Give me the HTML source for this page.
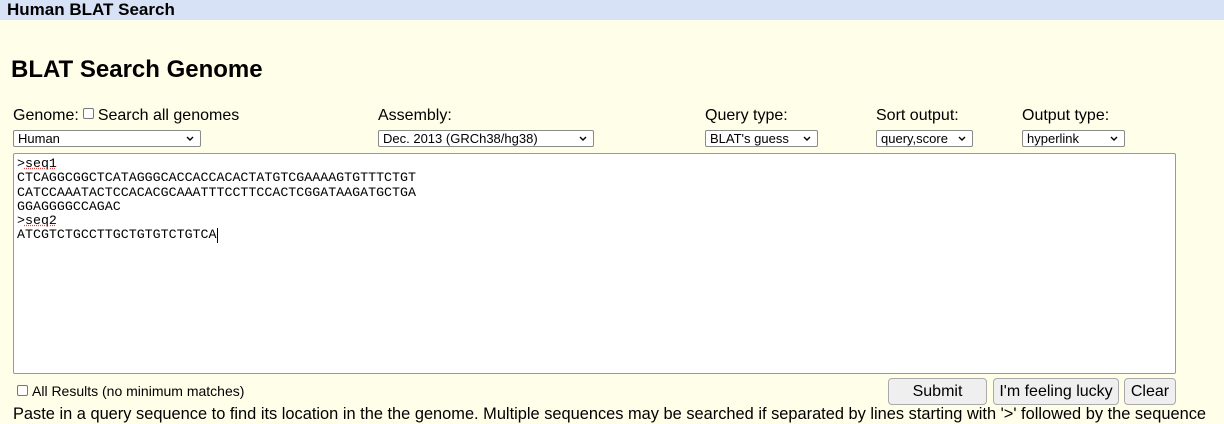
<!DOCTYPE html>
<html><head><meta charset="utf-8"><style>
*{box-sizing:border-box;margin:0;padding:0}
body{width:1224px;height:424px;overflow:hidden;background:#fffee9;font-family:"Liberation Sans",Arial,sans-serif;color:#000;position:relative}
.hdr{position:absolute;left:0;top:0;width:1224px;height:20px;background:#d7e2f6;font-weight:bold;font-size:17px;line-height:20px;padding-left:7px}
.ttl{position:absolute;left:11px;top:56px;font-size:24px;font-weight:bold}
.lbl{position:absolute;top:106px;font-size:16px;line-height:20px;white-space:nowrap}
.sel{position:absolute;top:130px;height:17px;border:1px solid #8a8a8a;background:#fff;font-size:13px;line-height:15px;padding-left:4px;border-radius:2px;white-space:nowrap}
.sel svg{position:absolute;right:6px;top:5px}
.cb{display:inline-block;width:11px;height:11px;border:1px solid #777;border-radius:2px;background:#fff;vertical-align:middle;position:relative;top:-2px;margin:0 4px}
.ta{position:absolute;left:13px;top:153px;width:1163px;height:221px;border:1px solid #999;background:#fff;border-radius:2px;font-family:"Liberation Mono",monospace;font-size:13.3px;line-height:14.3px;padding:3px 0 0 3px;white-space:pre}
.btn{position:absolute;top:378px;height:27px;border:1px solid #aaa;background:#efefef;border-radius:4px;font-size:16px;line-height:25px;text-align:center;white-space:nowrap}
.u{text-decoration:underline dotted #e44;}
.cur{display:inline-block;width:1px;height:15px;background:#000;vertical-align:top}
</style></head><body>
<div class="hdr">Human BLAT Search</div>
<div class="ttl">BLAT Search Genome</div>
<div class="lbl" style="left:13px">Genome:<span class="cb"></span>Search all genomes</div>
<div class="lbl" style="left:378px">Assembly:</div>
<div class="lbl" style="left:705px">Query type:</div>
<div class="lbl" style="left:876px">Sort output:</div>
<div class="lbl" style="left:1022px">Output type:</div>
<div class="sel" style="left:13px;width:188px">Human<svg width="8" height="6"><path d="M1 1l3 3 3-3" stroke="#000" stroke-width="1.4" fill="none"/></svg></div>
<div class="sel" style="left:378px;width:216px">Dec. 2013 (GRCh38/hg38)<svg width="8" height="6"><path d="M1 1l3 3 3-3" stroke="#000" stroke-width="1.4" fill="none"/></svg></div>
<div class="sel" style="left:705px;width:113px">BLAT's guess<svg width="8" height="6"><path d="M1 1l3 3 3-3" stroke="#000" stroke-width="1.4" fill="none"/></svg></div>
<div class="sel" style="left:876px;width:97px">query,score<svg width="8" height="6"><path d="M1 1l3 3 3-3" stroke="#000" stroke-width="1.4" fill="none"/></svg></div>
<div class="sel" style="left:1022px;width:103px">hyperlink<svg width="8" height="6"><path d="M1 1l3 3 3-3" stroke="#000" stroke-width="1.4" fill="none"/></svg></div>
<div class="ta">&gt;<span class="u">seq1</span>
CTCAGGCGGCTCATAGGGCACCACCACACTATGTCGAAAAGTGTTTCTGT
CATCCAAATACTCCACACGCAAATTTCCTTCCACTCGGATAAGATGCTGA
GGAGGGGCCAGAC
&gt;<span class="u">seq2</span>
ATCGTCTGCCTTGCTGTGTCTGTCA<span class="cur"></span></div>
<div style="position:absolute;left:13px;top:383px;font-size:14px;white-space:nowrap"><span class="cb"></span>All Results (no minimum matches)</div>
<div class="btn" style="left:888px;width:99px">Submit</div>
<div class="btn" style="left:993px;width:126px">I'm feeling lucky</div>
<div class="btn" style="left:1124px;width:52px">Clear</div>
<div style="position:absolute;left:13px;top:405px;font-size:16.4px;white-space:nowrap">Paste in a query sequence to find its location in the the genome. Multiple sequences may be searched if separated by lines starting with '&gt;' followed by the sequence</div>
</body></html>
